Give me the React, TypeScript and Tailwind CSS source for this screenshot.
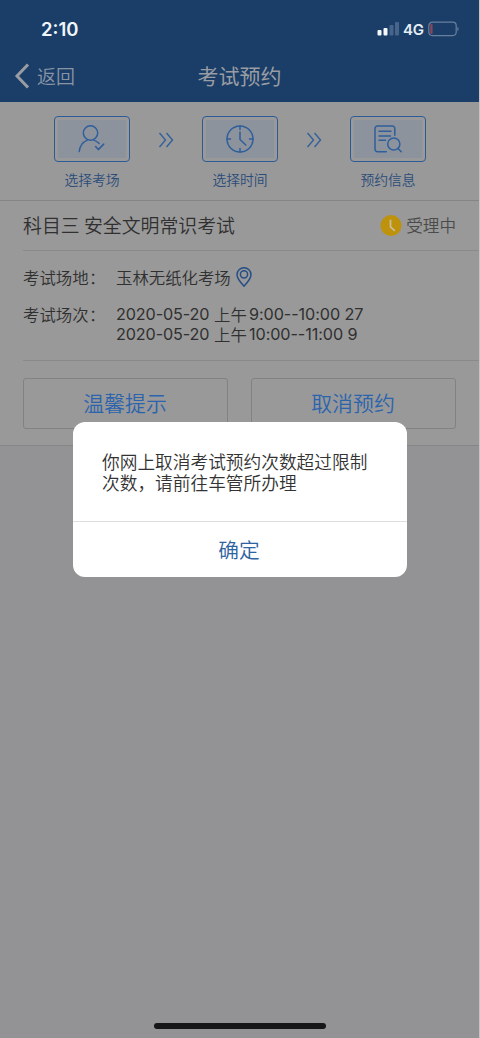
import type { ReactNode } from 'react';

const sessions = [
  { date: '2020-05-20', period: '上午', slot: '9:00--10:00 27' },
  { date: '2020-05-20', period: '上午', slot: '10:00--11:00 9' },
];

function StatusBar() {
  return (
    <div className="flex h-[52px] items-center justify-between pl-[41px] pr-[19px] pt-[6px]">
      <span className="font-['Inter'] text-[18.5px] font-semibold leading-none text-[#f1f6fc]">2:10</span>
      <div className="flex items-center">
        <svg width="23" height="14" viewBox="0 0 23 14">
          <rect x="0.5" y="8" width="4" height="5.5" rx="1" fill="#f4f7fb" />
          <rect x="6.5" y="6" width="4" height="7.5" rx="1" fill="#f4f7fb" />
          <rect x="12.5" y="3" width="4" height="10.5" rx="1" fill="#47658a" />
          <rect x="18" y="0" width="4" height="13.5" rx="1" fill="#47658a" />
        </svg>
        <span className="ml-[3px] w-[21px] font-['Inter'] text-[15px] font-semibold leading-none tracking-[-0.3px] text-[#e5edf5]">4G</span>
        <svg className="ml-[4px]" width="32" height="16" viewBox="0 0 32 16">
          <rect x="0.8" y="1.2" width="27.4" height="13.4" rx="3.5" fill="none" stroke="#687f9d" strokeWidth="1.2" />
          <rect x="2.2" y="3" width="2.4" height="10" rx="1" fill="#87475c" />
          <path d="M29.4 5.8c1.6.7 1.6 3.7 0 4.4z" fill="#687f9d" />
        </svg>
      </div>
    </div>
  );
}

function PersonIcon() {
  return (
    <svg width="28" height="28" viewBox="0 0 28 28" fill="none" stroke="currentColor" strokeWidth="1.5" strokeLinecap="round" strokeLinejoin="round">
      <circle cx="12.5" cy="8" r="7.2" />
      <path d="M1.3 26.5C1.8 20.6 5 17 9.3 15.1M15.8 15.1c2.3.7 4 1.900 5.400 3.400" />
      <path d="M17.600 21.600l2.700 3 5.400-5.500" />
    </svg>
  );
}

function ClockIcon() {
  return (
    <svg width="28" height="28" viewBox="0 0 28 28" fill="none" stroke="currentColor" strokeWidth="1.5" strokeLinecap="round" strokeLinejoin="round">
      <circle cx="14" cy="14" r="13" />
      <path d="M14 1v3.5M14 23.5V27M1 14h3.5M23.5 14H27M14 7v7.5l5.8 5.5" />
    </svg>
  );
}

function RecordIcon() {
  return (
    <svg width="28" height="28" viewBox="0 0 28 28" fill="none" stroke="currentColor" strokeWidth="1.5" strokeLinecap="round" strokeLinejoin="round">
      <path d="M12.3 26.7H3.5a2.5 2.5 0 0 1-2.5-2.5V3.5A2.5 2.5 0 0 1 3.5 1h14.8a2.5 2.5 0 0 1 2.5 2.5v6.7M5 6.3h12M5 11h11.5M5 15.2h6.5" />
      <circle cx="19.8" cy="19" r="6.1" />
      <path d="M24 23.4l3.2 3.4" />
    </svg>
  );
}

function Step({ label, children }: { label: string; children: ReactNode }) {
  return (
    <div className="flex w-[76px] flex-col items-center">
      <div className="h-[46px] w-full rounded-[4px] border border-[#2c5b97] p-[3px] text-[#2f5f9b]">
        <div className="flex h-full items-center justify-center bg-[#8d939d]">{children}</div>
      </div>
      <span className="mt-[7px] whitespace-nowrap text-[13.8px] leading-[20px] text-[#2a4c79]">{label}</span>
    </div>
  );
}

function Chevrons() {
  return (
    <svg className="mt-[16px]" width="16" height="16" viewBox="0 0 16 16" fill="none" stroke="#33619b" strokeWidth="1.4">
      <path d="M1.5 1l6 7-6 7M8.5 1l6 7-6 7" />
    </svg>
  );
}

function ActionButton({ label }: { label: string }) {
  return (
    <button className="h-[51px] w-[205px] rounded-[3px] border border-[#828282] pb-[2px] pr-px text-[20.9px] leading-none text-[#2b64ad]">
      {label}
    </button>
  );
}

export default function App() {
  return (
    <div className="relative flex h-[1038px] w-[480px] flex-col overflow-hidden border-r border-[#c4c4c6] bg-[#939395] font-['Noto_Sans_CJK_SC',sans-serif] font-[350]">
      {/* Header */}
      <header className="h-[102px] bg-[#1b3e68]">
        <StatusBar />
        <div className="grid h-[48px] grid-cols-3 items-center text-[#999da3]">
          <button className="flex items-center pl-[14px]">
            <svg width="16" height="26" viewBox="0 0 16 26" fill="none" stroke="currentColor" strokeWidth="3">
              <path d="M14 1.5L3 13l11 11.5" />
            </svg>
            <span className="ml-[7px] pb-px text-[19px] leading-none text-[#8995a5]">返回</span>
          </button>
          <h1 className="pb-[2px] text-center text-[21px] font-normal leading-none">考试预约</h1>
        </div>
      </header>

      <main className="border-b border-[#858587] bg-[#999999]">
        {/* Steps */}
        <div className="flex h-[99px] items-start justify-between border-b border-[#858587] pl-[54px] pr-[53px] pt-[14px]">
          <Step label="选择考场"><PersonIcon /></Step>
          <Chevrons />
          <Step label="选择时间"><ClockIcon /></Step>
          <Chevrons />
          <Step label="预约信息"><RecordIcon /></Step>
        </div>

        {/* Exam */}
        <div className="ml-[23px] flex h-[50px] items-center justify-between border-b border-[#8a8a8b] pr-[23px]">
          <h2 className="text-[18.9px] leading-none text-[#303030]">科目三 安全文明常识考试</h2>
          <div className="flex items-center">
            <svg width="22" height="22" viewBox="0 0 22 22">
              <circle cx="11" cy="10.6" r="10.5" fill="#be920c" />
              <path d="M10.5 4.8v7l4.3 4" fill="none" stroke="#c9bfa0" strokeWidth="1.7" />
            </svg>
            <span className="ml-[4px] text-[16.6px] leading-none text-[#4b4b4b]">受理中</span>
          </div>
        </div>

        <div className="ml-[23px] h-[110px] border-b border-[#8a8a8b] pt-[16px] text-[16.4px] leading-[20px] text-[#303030]">
          <div className="flex items-center">
            <span className="w-[66px]">考试场地</span>
            <span className="w-[27px]">：</span>
            <span>玉林无纸化考场</span>
            <svg className="ml-[5px]" width="16" height="20" viewBox="0 0 16 20" fill="none" stroke="#254e86" strokeWidth="1.5">
              <path d="M8 19.2C5.500 16.400 1 11.700 1 7.700a7 7 0 0 1 14 0c0 4-4.500 8.700-7 11.500z" />
              <circle cx="8" cy="7.3" r="3.6" />
            </svg>
          </div>
          <div className="mt-[17px] flex">
            <span className="w-[66px]">考试场次</span>
            <span className="w-[27px]">：</span>
            <div>
              {sessions.map(s => (
                <p key={s.slot} className="flex whitespace-nowrap">
                  <span className="w-[98px] font-['Inter'] text-[16.2px] font-normal tracking-[-0.12px]">{s.date}</span>
                  <span className="w-[35px]">{s.period}</span>
                  <span className="font-['Inter'] text-[16.2px] font-normal tracking-[-0.08px]">{s.slot}</span>
                </p>
              ))}
            </div>
          </div>
        </div>

        <div className="flex h-[84px] items-start justify-between px-[23px] pt-[17px]">
          <ActionButton label="温馨提示" />
          <ActionButton label="取消预约" />
        </div>
      </main>

      {/* Dialog */}
      <div className="absolute left-[73px] top-[422px] flex h-[155px] w-[334px] flex-col rounded-[12px] bg-white">
        <div className="flex-1 pl-[29px] pt-[29px] text-[17.7px] leading-[21px] text-[#333333]">
          <p>你网上取消考试预约次数超过限制</p>
          <p>次数，请前往车管所办理</p>
        </div>
        <button className="h-[56px] border-t border-[#dedede] pr-[2px] text-[20.7px] leading-none text-[#2e63a3]">确定</button>
      </div>

      {/* Home indicator */}
      <div className="mb-[9px] ml-[154px] mt-auto h-[6px] w-[172px] rounded-full bg-[#161618]" />
    </div>
  );
}
